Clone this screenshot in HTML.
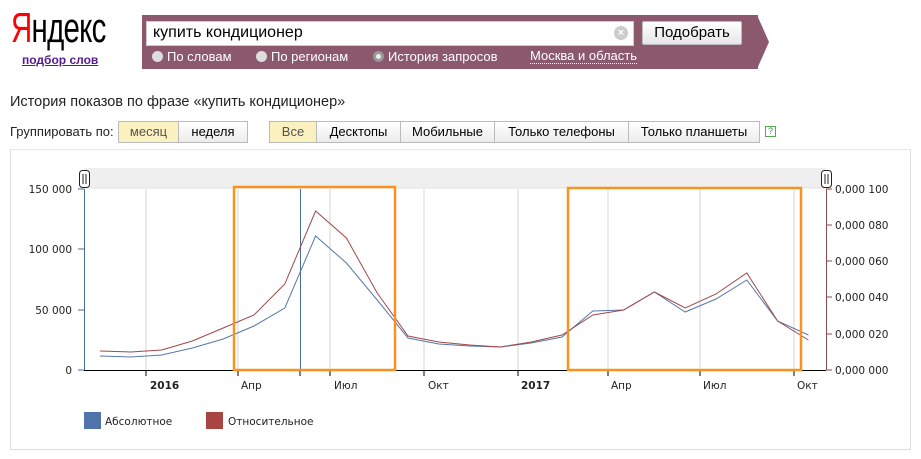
<!DOCTYPE html>
<html><head><meta charset="utf-8"><style>
*{margin:0;padding:0;box-sizing:border-box}
body{width:921px;height:459px;background:#fff;font-family:"Liberation Sans",Arial,sans-serif;position:relative;overflow:hidden;color:#000}
.a{position:absolute}
.logo{left:11px;top:4px;font-size:42px;letter-spacing:-1px;transform:scaleX(0.7);transform-origin:left top;font-family:"Liberation Sans Narrow","Liberation Sans",sans-serif}
.sub{left:22px;top:53px;font-size:12px;font-weight:bold;color:#551a8b;text-decoration:underline}
.band{left:142px;top:15px;width:616px;height:54px;background:#8c586d}
.input{left:146px;top:21px;width:488px;height:25px;background:#fff;border:1px solid #ccc;font-size:16px;padding:2px 6px}
.clr{left:614px;top:26px;width:14px;height:14px;border-radius:50%;background:#ccc;color:#fff;font-size:11px;line-height:14px;text-align:center;font-weight:bold}
.btn{left:642px;top:21px;width:100px;height:24px;background:linear-gradient(#fff,#e6e6e6);border:1px solid #bbb;border-radius:2px;font-size:15px;text-align:center;line-height:22px}
.rad{top:49px;font-size:13px;color:#fff}
.rad i{display:inline-block;width:11px;height:11px;border-radius:50%;background:#ddd;margin-right:4px;vertical-align:-1px}
.title{left:10px;top:94px;font-size:14.5px;color:#222}
.g{top:121px;height:22px;border:1px solid #bbb;font-size:13px;line-height:20px;text-align:center;background:linear-gradient(#fff,#ececec)}
.sel{background:#fbf0c0;color:#555}
</style></head><body>
<div class="a logo"><span style="color:#f00">Я</span>ндекс</div>
<div class="a sub">подбор слов</div>
<div class="a band"></div>
<svg class="a" style="left:757px;top:15px" width="14" height="54"><polygon points="0,0 12,27 0,54" fill="#8c586d"/></svg>
<div class="a input">купить кондиционер</div>
<div class="a clr">×</div>
<div class="a btn">Подобрать</div>
<div class="a rad" style="left:152px"><i></i>По словам</div>
<div class="a rad" style="left:256px"><i></i>По регионам</div>
<div class="a rad" style="left:373px"><i style="background:#eee;border:3px solid #999"></i>История запросов</div>
<div class="a rad" style="left:530px;border-bottom:1px dotted #fff;line-height:14px;top:49px">Москва и область</div>
<div class="a title">История показов по фразе «купить кондиционер»</div>
<div class="a" style="left:10px;top:124px;font-size:13px;color:#222">Группировать по:</div>
<div class="a g sel" style="left:118px;width:61px">месяц</div>
<div class="a g" style="left:178px;width:70px">неделя</div>
<div class="a g sel" style="left:269px;width:48px">Все</div>
<div class="a g" style="left:316px;width:85px">Десктопы</div>
<div class="a g" style="left:400px;width:95px">Мобильные</div>
<div class="a g" style="left:494px;width:135px">Только телефоны</div>
<div class="a g" style="left:628px;width:132px">Только планшеты</div>
<div class="a" style="left:765px;top:126px;width:11px;height:11px;border:1px solid #5a5;color:#393;font-size:9px;line-height:9px;text-align:center">?</div>
<div class="a" style="left:10px;top:149px;width:901px;height:301px;border:1px solid #ddd;border-top-color:#e6e6e6"></div>
<svg class="a" style="left:0;top:0" width="921" height="459" font-family="DejaVu Sans,Verdana,sans-serif" font-size="10.5">
<rect x="84" y="168" width="742" height="20" fill="#efefef"/>
<line x1="84" y1="188" x2="826" y2="188" stroke="#e0e0e0"/>
<g stroke="#d6d6d6">
<line x1="146" y1="189" x2="146" y2="370"/><line x1="238" y1="189" x2="238" y2="370"/><line x1="330" y1="189" x2="330" y2="370"/><line x1="424" y1="189" x2="424" y2="370"/><line x1="518" y1="189" x2="518" y2="370"/><line x1="608" y1="189" x2="608" y2="370"/><line x1="700" y1="189" x2="700" y2="370"/><line x1="794" y1="189" x2="794" y2="370"/>
</g>
<line x1="84.5" y1="189" x2="84.5" y2="370" stroke="#4a6a9a"/>
<line x1="300.5" y1="189" x2="300.5" y2="370" stroke="#4a6a9a"/>
<line x1="826.5" y1="189" x2="826.5" y2="370" stroke="#8a4a4a"/>
<g stroke="#8a4a4a"><line x1="826" y1="189" x2="832" y2="189"/><line x1="826" y1="225" x2="832" y2="225"/><line x1="826" y1="261" x2="832" y2="261"/><line x1="826" y1="297" x2="832" y2="297"/><line x1="826" y1="334" x2="832" y2="334"/><line x1="826" y1="370" x2="832" y2="370"/></g>
<g stroke="#4a6a9a"><line x1="78" y1="189" x2="84" y2="189"/><line x1="78" y1="249" x2="84" y2="249"/><line x1="78" y1="310" x2="84" y2="310"/><line x1="78" y1="370" x2="84" y2="370"/></g>
<line x1="84" y1="370.5" x2="826" y2="370.5" stroke="#000"/>
<g stroke="#000"><line x1="146" y1="370" x2="146" y2="376"/><line x1="238" y1="370" x2="238" y2="376"/><line x1="300" y1="370" x2="300" y2="376"/><line x1="330" y1="370" x2="330" y2="376"/><line x1="424" y1="370" x2="424" y2="376"/><line x1="518" y1="370" x2="518" y2="376"/><line x1="608" y1="370" x2="608" y2="376"/><line x1="700" y1="370" x2="700" y2="376"/><line x1="794" y1="370" x2="794" y2="376"/></g>
<polyline fill="none" stroke="#5878a8" stroke-width="1" points="100,356 130.8,357 161.6,355 192.4,348 223.2,339 254,326 284.8,308 315.6,236 346.4,263 377.2,300 408,338 438.8,344 469.6,346 500.4,347 531.2,343 562,337 592.8,311 623.6,310 654.4,292 685.2,312 716,299 746.8,280 777.6,321 808.4,335"/>
<polyline fill="none" stroke="#a04848" stroke-width="1" points="100,351 130.8,352 161.6,350 192.4,341 223.2,328 254,315 284.8,284 315.6,211 346.4,238 377.2,293 408,336 438.8,342 469.6,345 500.4,347 531.2,342 562,335 592.8,315 623.6,310 654.4,292 685.2,308 716,294 746.8,273 777.6,321 808.4,340"/>
<rect x="234" y="187" width="161" height="183" fill="none" stroke="#f7931e" stroke-width="2.5"/>
<rect x="568" y="188" width="233" height="182" fill="none" stroke="#f7931e" stroke-width="2.5"/>
<g fill="#fff" stroke="#222"><rect x="79.5" y="170.5" width="10" height="17" rx="3"/><rect x="821.5" y="170.5" width="10" height="17" rx="3"/></g>
<g stroke="#222"><line x1="83" y1="174" x2="83" y2="184"/><line x1="86" y1="174" x2="86" y2="184"/><line x1="825" y1="174" x2="825" y2="184"/><line x1="828" y1="174" x2="828" y2="184"/></g>
<g fill="#222" text-anchor="end"><text x="72" y="193">150 000</text><text x="72" y="253">100 000</text><text x="72" y="314">50 000</text><text x="72" y="374">0</text></g>
<g fill="#222"><text x="835" y="193">0,000 100</text><text x="835" y="229">0,000 080</text><text x="835" y="265">0,000 060</text><text x="835" y="301">0,000 040</text><text x="835" y="338">0,000 020</text><text x="835" y="374">0,000 000</text></g>
<g fill="#222"><text x="150" y="389" font-weight="bold">2016</text><text x="241" y="389">Апр</text><text x="334" y="389">Июл</text><text x="428" y="389">Окт</text><text x="521" y="389" font-weight="bold">2017</text><text x="611" y="389">Апр</text><text x="703" y="389">Июл</text><text x="797" y="389">Окт</text></g>
<rect x="84" y="412" width="17" height="17" fill="#4f74aa"/>
<rect x="206" y="412" width="17" height="17" fill="#a74542"/>
<text x="105" y="425" fill="#222">Абсолютное</text>
<text x="228" y="425" fill="#222">Относительное</text>
</svg>
</body></html>
